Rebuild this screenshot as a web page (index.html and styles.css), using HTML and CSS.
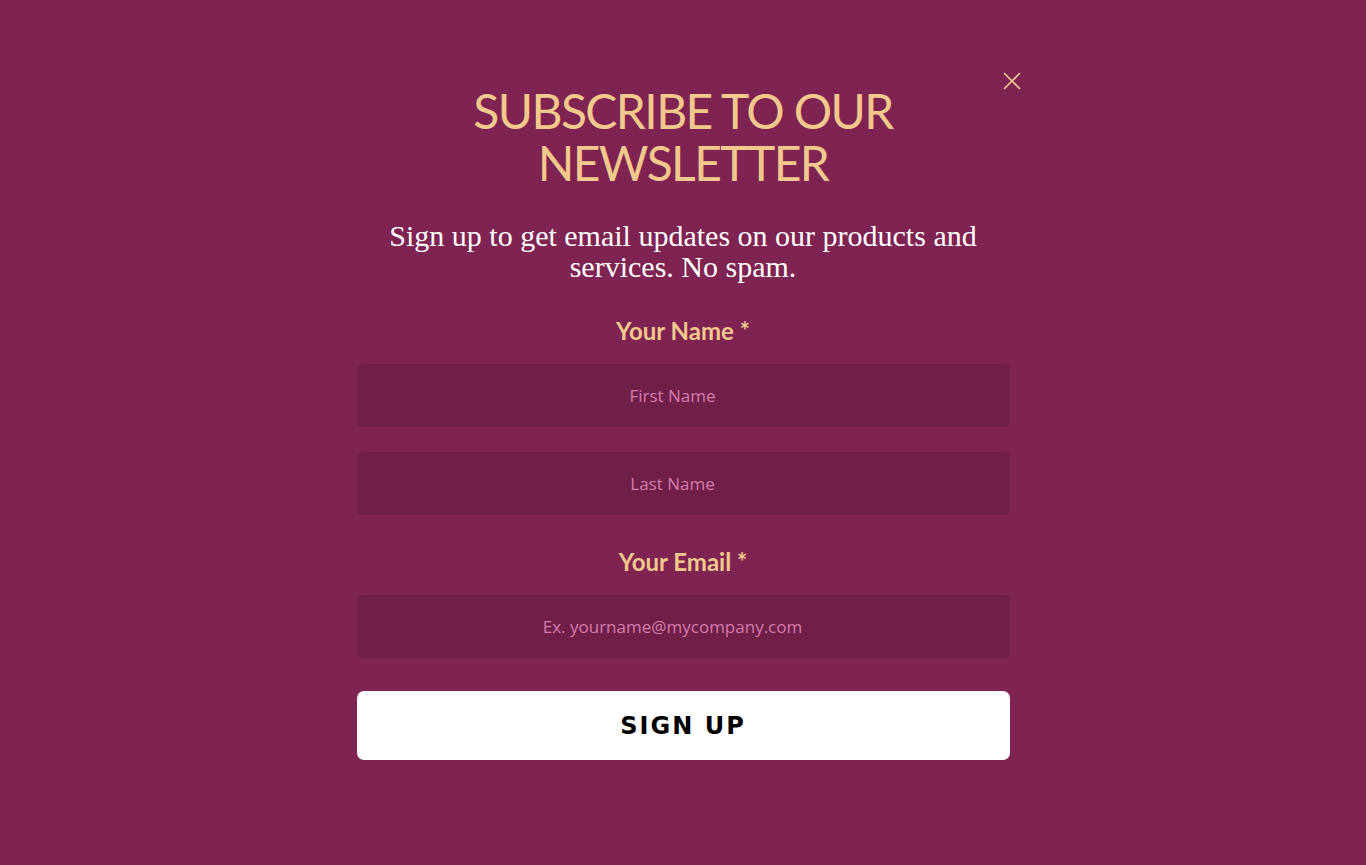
FILE: index.html
```html
<!DOCTYPE html>
<html lang="en">
<head>
<meta charset="utf-8">
<title>Subscribe</title>
<link rel="stylesheet" href="styles.css">
</head>
<body>
<div class="page">
  <div class="modal">
    <button class="close" aria-label="Close">
      <svg width="18" height="18" viewBox="0 0 18 18"><path d="M1 1L17 17M17 1L1 17" stroke="#f2c98c" stroke-width="1.6" fill="none"/></svg>
    </button>
    <h1 class="title">SUBSCRIBE TO OUR<br>NEWSLETTER</h1>
    <p class="lead">Sign up to get email updates on our products and services. No spam.</p>
    <form class="form">
      <label class="label">Your Name *</label>
      <input class="field" type="text" placeholder="First Name">
      <input class="field" type="text" placeholder="Last Name">
      <label class="label label-email">Your Email *</label>
      <input class="field" type="email" placeholder="Ex. yourname@mycompany.com">
      <button class="submit" type="button">SIGN UP</button>
    </form>
  </div>
</div>
</body>
</html>
```

FILE: styles.css
```css
html, body {
  margin: 0;
  padding: 0;
  background: #7f2352;
}
.page {
  min-height: 865px;
  display: flex;
  justify-content: center;
}
.modal {
  position: relative;
  width: 653px;
  padding-top: 85px;
  display: flex;
  flex-direction: column;
  align-items: center;
}
.close {
  position: absolute;
  top: 71px;
  right: -12px;
  width: 20px;
  height: 20px;
  padding: 0;
  border: 0;
  background: none;
  display: flex;
  align-items: center;
  justify-content: center;
}
.title {
  margin: 0;
  font-family: Lato, sans-serif;
  font-weight: 400;
  font-size: 48px;
  line-height: 52px;
  letter-spacing: -1.6px;
  color: #f2c98c;
  text-align: center;
}
.lead {
  margin: 31px 0 0;
  width: 640px;
  font-family: "Liberation Serif", serif;
  font-size: 30px;
  line-height: 31px;
  color: #ffffff;
  text-align: center;
}
.form {
  margin-top: 35px;
  width: 653px;
  display: flex;
  flex-direction: column;
  align-items: center;
}
.label {
  font-family: Lato, sans-serif;
  font-weight: 700;
  font-size: 24px;
  line-height: 28px;
  color: #f2c98c;
  margin-bottom: 19px;
}
.label-email {
  margin-top: 33px;
}
.field {
  box-sizing: border-box;
  width: 653px;
  height: 63px;
  border: 0;
  border-radius: 6px;
  background: #701f48;
  padding: 0 21px 0 0;
  font-family: "Open Sans", sans-serif;
  font-size: 17px;
  color: #ffffff;
  text-align: center;
  outline: none;
}
.field + .field {
  margin-top: 25px;
}
.field::placeholder {
  color: #d77cae;
}
.submit {
  margin-top: 33px;
  width: 653px;
  height: 69px;
  border: 0;
  border-radius: 7px;
  background: #ffffff;
  color: #000000;
  font-family: "DejaVu Sans", sans-serif;
  font-weight: 700;
  font-size: 24px;
  letter-spacing: 2px;
}
```
